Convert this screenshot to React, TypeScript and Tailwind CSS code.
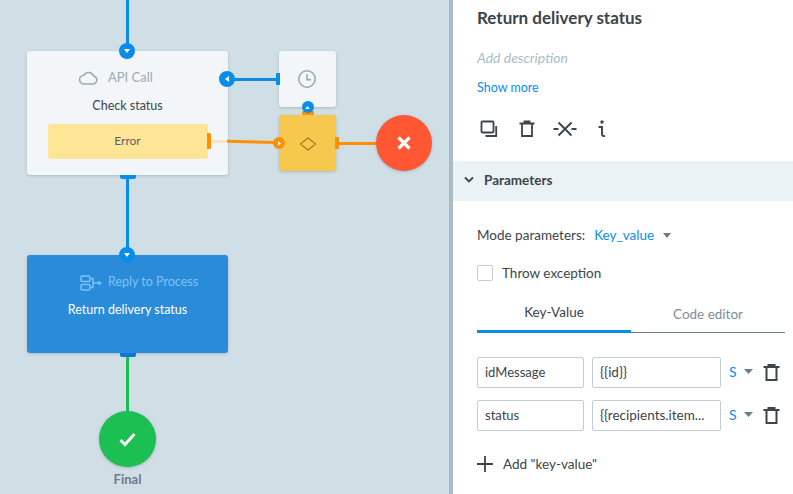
import React from "react";

const FONT = 'Lato, "Noto Sans", sans-serif';

function TrashIcon() {
  return (
    <svg width="17" height="17" viewBox="0 0 17 17" fill="none" stroke="#3c444c" strokeWidth="2">
      <path d="M0.5 3h16M5.5 3V1h6v2M3.5 3v13h10V3" />
    </svg>
  );
}

function Dot({ cx, cy, r, dir, color = "bg-[#0a8ceb]" }: { cx: number; cy: number; r: number; dir: "down" | "left" | "up" | "right"; color?: string }) {
  const pts = { down: "3,4 9,4 6,8", up: "3,8 9,8 6,4", left: "8,3 8,9 4,6", right: "4,3 4,9 8,6" }[dir];
  return (
    <div className={`absolute rounded-full flex items-center justify-center ${color}`} style={{ left: cx - r, top: cy - r, width: r * 2, height: r * 2 }}>
      <svg width={r === 8 ? 12 : 9} height={r === 8 ? 12 : 9} viewBox="0 0 12 12"><polygon points={pts} fill="#fff" /></svg>
    </div>
  );
}

function Canvas() {
  return (
    <div className="relative w-[449px] h-full bg-[#d0dfe6] overflow-hidden shrink-0">
      {/* connectors */}
      <div className="absolute left-[126px] top-0 w-[3px] h-[46px] bg-[#0a8ceb]" />
      <div className="absolute left-[126px] top-[176px] w-[3px] h-[72px] bg-[#0a8ceb]" />
      <div className="absolute left-[126px] top-[356px] w-[3px] h-[56px] bg-[#1cbf51]" />
      <div className="absolute left-[234px] top-[78px] w-[44px] h-[3px] bg-[#0a8ceb]" />
      <div className="absolute left-[339px] top-[142px] w-[38px] h-[3px] bg-[#ff9100]" />

      {/* API call node */}
      <div className="absolute left-[27px] top-[51px] w-[201px] h-[124px] rounded-[3px] bg-[#f2f6f8] shadow-[0_1px_3px_rgba(60,80,100,0.25)] flex flex-col items-center pt-[14px]">
        <div className="self-stretch pl-[52px] flex items-center h-[26px] text-[13px] text-[#9aa9b5]">
          <span className="w-[29px] shrink-0 flex">
            <svg width="19" height="14" viewBox="0 0 19 14" fill="none" stroke="#9aa9b5" strokeWidth="1.5">
              <path d="M5 13h9a4 4 0 0 0 .6-7.9A5.2 5.2 0 0 0 5 4.2 4.4 4.4 0 0 0 5 13z" />
            </svg>
          </span>
          <span>API Call</span>
        </div>
        <div className="mt-[2px] h-[26px] leading-[26px] text-[12.5px] text-[#3c444c]">Check status</div>
        <div className="mt-[5px] w-[160px] h-[35px] rounded-[3px] bg-[#ffe595] flex items-center justify-center pb-[2px] text-[12px] text-[#5d6267]">Error</div>
      </div>
      {/* faded error link inside node */}
      <div className="absolute left-[212px] top-[140px] w-[16px] h-[3px] bg-[#fde3c6]" />
      <svg className="absolute left-[227px] top-[139px]" width="50" height="6" viewBox="0 0 50 6">
        <path d="M0 2.2 L50 3.6" stroke="#ff9100" strokeWidth="3" />
      </svg>
      <div className="absolute left-[207px] top-[133px] w-[4px] h-[16px] rounded-r-[1px] bg-[#ff9100]" />
      <div className="absolute left-[120px] top-[175px] w-[16px] h-[4px] rounded-b-[2px] bg-[#0a8ceb]" />

      {/* timer node */}
      <div className="absolute left-[279px] top-[51px] w-[57px] h-[56px] rounded-[3px] bg-[#f2f6f8] shadow-[0_1px_3px_rgba(60,80,100,0.25)] flex items-center justify-center">
        <svg width="20" height="20" viewBox="0 0 20 20" fill="none" stroke="#9aa9b5" strokeWidth="1.6" className="-mt-[1px] -ml-[2px]">
          <circle cx="10" cy="10" r="8.2" />
          <path d="M10 5.2V10.6H14" />
        </svg>
      </div>
      <div className="absolute left-[276px] top-[73px] w-[4px] h-[12px] rounded-l-[1px] bg-[#0a8ceb]" />

      {/* gateway node */}
      <div className="absolute left-[279px] top-[115px] w-[57px] h-[56px] rounded-[3px] bg-[#f6c94e] shadow-[0_1px_3px_rgba(60,80,100,0.25)] flex items-center justify-center">
        <svg width="18" height="14" viewBox="0 0 18 14" fill="none" stroke="#a9832b" strokeWidth="1.5" className="mt-[1px]">
          <path d="M9 1 16.5 7 9 13 1.5 7z" strokeLinejoin="round" />
        </svg>
      </div>
      <div className="absolute left-[302px] top-[111px] w-[12px] h-[4px] rounded-t-[1px] bg-[#ff9100]" />
      <div className="absolute left-[335px] top-[137px] w-[4px] h-[12px] rounded-r-[1px] bg-[#ff9100]" />

      {/* error end */}
      <div className="absolute left-[376px] top-[115px] w-[56px] h-[56px] rounded-full bg-[#ff5733] shadow-[0_1px_3px_rgba(60,80,100,0.3)] flex items-center justify-center">
        <svg width="14" height="14" viewBox="0 0 14 14" stroke="#fff" strokeWidth="3.2"><path d="M1.5 1.5l11 11M12.5 1.5l-11 11" /></svg>
      </div>

      {/* reply node */}
      <div className="absolute left-[27px] top-[255px] w-[201px] h-[98px] rounded-[3px] bg-[#2a8bd9] shadow-[0_1px_3px_rgba(60,80,100,0.25)] flex flex-col items-center pt-[15px]">
        <div className="self-stretch pl-[53px] flex items-center h-[25px] text-[12.5px] text-[#7cc4f8]">
          <span className="w-[28px] shrink-0 flex">
            <svg width="23" height="16" viewBox="0 0 23 16" fill="none" stroke="#7cc4f8" strokeWidth="1.5">
              <rect x="1" y="1" width="9" height="5.5" rx="1.2" />
              <rect x="1" y="9.5" width="9" height="5.5" rx="1.2" />
              <path d="M10 3.5h3v9h-3M13 8h7" />
              <path d="M18.5 5.5 22 8l-3.5 2.5z" fill="#7cc4f8" stroke="none" />
            </svg>
          </span>
          <span>Reply to Process</span>
        </div>
        <div className="mt-[2px] h-[26px] leading-[26px] text-[12.5px] text-white">Return delivery status</div>
      </div>
      <div className="absolute left-[120px] top-[353px] w-[16px] h-[4px] rounded-b-[2px] bg-[#0a78d6]" />

      {/* final */}
      <div className="absolute left-[99px] top-[411px] w-[57px] h-[56px] rounded-full bg-[#1cbf51] shadow-[0_1px_3px_rgba(60,80,100,0.3)] flex items-center justify-center">
        <svg width="17" height="15" viewBox="0 0 17 15" fill="none" stroke="#fff" strokeWidth="3"><path d="M1.5 8l4.5 4.5L15.5 2" /></svg>
      </div>
      <div className="absolute left-[99px] top-[471px] w-[57px] h-[16px] leading-[16px] text-center text-[13px] font-bold text-[#6c7c89]">Final</div>

      <Dot cx={127} cy={51} r={8} dir="down" />
      <Dot cx={127} cy={255} r={8} dir="down" />
      <Dot cx={227} cy={79} r={8} dir="left" />
      <Dot cx={307.5} cy={107} r={6} dir="up" />
      <Dot cx={279} cy={143} r={6} dir="right" color="bg-[#ff9100]" />
    </div>
  );
}

function Row({ k, v }: { k: string; v: string }) {
  return (
    <div className="flex items-center h-[31px]">
      <div className="w-[107px] h-full rounded-[2px] border border-[#c2ced6] px-[7px] leading-[28px] text-[13px] text-[#3c444c]">{k}</div>
      <div className="ml-[8px] w-[129px] h-full rounded-[2px] border border-[#c2ced6] px-[7px] leading-[28px] text-[13.5px] text-[#3c444c] whitespace-nowrap overflow-hidden">{v}</div>
      <span className="ml-[8px] text-[14px] text-[#0a8ceb] w-[8px] -mt-[2px]">S</span>
      <svg className="ml-[7px] -mt-[2px]" width="9" height="5" viewBox="0 0 9 5"><polygon points="0,0 9,0 4.5,5" fill="#6c7c89" /></svg>
      <span className="ml-[10px] flex"><TrashIcon /></span>
    </div>
  );
}

function Panel() {
  return (
    <div className="flex-1 h-full bg-white border-l-[4px] border-[#a9bcc8] overflow-hidden text-[#3c444c] text-[13.5px]">
      <div className="pl-[24px] pt-[6px]">
        <div className="h-[24px] leading-[24px] text-[17px] font-bold whitespace-nowrap">Return delivery status</div>
        <div className="mt-[18px] h-[20px] leading-[20px] italic text-[14px] text-[#a9bcc8]">Add description</div>
        <div className="mt-[10px] h-[20px] leading-[20px] text-[12.5px] text-[#0a8ceb]">Show more</div>
        <div className="mt-[20px] h-[22px] flex items-center">
          <svg width="18" height="18" viewBox="0 0 18 18" fill="none" stroke="#3c444c" strokeWidth="1.8" className="ml-[3px]">
            <rect x="1.5" y="1.5" width="12" height="11" rx="1" />
            <path d="M16.2 6v10H5.5" />
          </svg>
          <svg width="18" height="18" viewBox="0 0 18 18" fill="none" stroke="#3c444c" strokeWidth="1.8" className="ml-[20px]">
            <path d="M1.5 3.5h15M6.5 3.5V1.5h5v2M4 3.5V16h10V3.5" />
          </svg>
          <svg width="24" height="16" viewBox="0 0 24 16" fill="none" stroke="#3c444c" strokeWidth="1.9" className="ml-[17px]">
            <path d="M0.5 8h5M18.5 8h5M5.5 1.5l13 13M18.5 1.5l-13 13" />
          </svg>
          <svg width="10" height="18" viewBox="0 0 10 18" fill="none" stroke="#3c444c" strokeWidth="1.9" className="ml-[20px]">
            <circle cx="5" cy="2" r="1.7" fill="#3c444c" stroke="none" />
            <path d="M1.5 7H5v7.5q0 1.6 3 1.6" />
          </svg>
        </div>
      </div>

      <div className="mt-[21px] h-[40px] bg-[#ebf2f6] flex items-center pl-[10px] pb-[2px]">
        <svg width="12" height="8" viewBox="0 0 12 8" fill="none" stroke="#3c444c" strokeWidth="1.8"><path d="M2 1.5l4 4 4-4" /></svg>
        <span className="ml-[9px] font-bold">Parameters</span>
      </div>

      <div className="pl-[24px] pr-[8px]">
        <div className="mt-[24px] h-[20px] flex items-center">
          <span>Mode parameters:</span>
          <span className="ml-[9px] text-[#0a8ceb]">Key_value</span>
          <svg className="ml-[9px]" width="8" height="5" viewBox="0 0 8 5"><polygon points="0,0 8,0 4,5" fill="#6c7c89" /></svg>
        </div>
        <div className="mt-[19px] h-[18px] flex items-center">
          <div className="w-[16px] h-[16px] rounded-[2px] border border-[#c2ced6]" />
          <span className="ml-[9px]">Throw exception</span>
        </div>
        <div className="mt-[18px] flex h-[33px] border-b border-[#6c7c89]">
          <div className="w-[154px] h-[33px] border-b-[3px] border-[#0a8ceb] flex items-center justify-center pb-[5px]">Key-Value</div>
          <div className="flex-1 flex items-center justify-center pb-[4px] text-[#7f8e9a]">Code editor</div>
        </div>
        <div className="mt-[24px] flex flex-col gap-[12px]">
          <Row k="idMessage" v="{{id}}" />
          <Row k="status" v="{{recipients.item..." />
        </div>
        <div className="mt-[23px] h-[20px] flex items-center">
          <svg width="16" height="16" viewBox="0 0 16 16" stroke="#3c444c" strokeWidth="1.8"><path d="M8 0v16M0 8h16" /></svg>
          <span className="ml-[10px]">Add "key-value"</span>
        </div>
      </div>
    </div>
  );
}

export default function App() {
  return (
    <div className="w-[793px] h-[494px] flex overflow-hidden" style={{ fontFamily: FONT }}>
      <Canvas />
      <Panel />
    </div>
  );
}
